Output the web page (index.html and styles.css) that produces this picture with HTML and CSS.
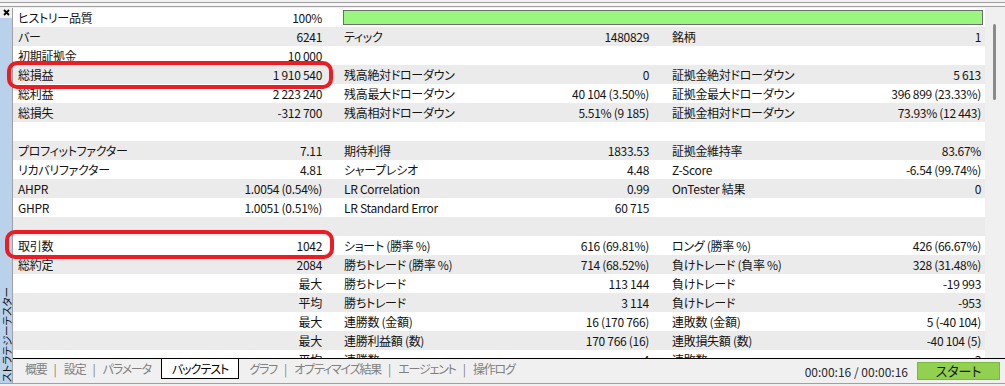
FILE: index.html
```html
<!DOCTYPE html>
<html lang="ja">
<head>
<meta charset="utf-8">
<title>ストラテジーテスター</title>
<link rel="stylesheet" href="styles.css">
</head>
<body>
<div class="top"><div class="top-lines"></div></div>
<div class="frame">
  <div class="side">
    <div class="close"><svg width="7" height="7" viewBox="0 0 7 7"><path d="M1 1 L6 6 M6 1 L1 6" stroke="#000" stroke-width="1.8" fill="none"/></svg></div>
    <div class="side-label"><span>ストラテジーテスター</span></div>
  </div>
  <div class="main">
    <div class="report">
      <div class="table">
        <div class="row">
          <div class="cell a"><span>ヒストリー品質</span><span>100%</span></div>
          <div class="cell bar-cell"><div class="bar"></div></div>
        </div>
        <div class="row">
          <div class="cell a"><span>バー</span><span>6241</span></div>
          <div class="cell b"><span>ティック</span><span>1480829</span></div>
          <div class="cell c"><span>銘柄</span><span>1</span></div>
        </div>
        <div class="row">
          <div class="cell a"><span>初期証拠金</span><span>10 000</span></div>
          <div class="cell b"></div>
          <div class="cell c"></div>
        </div>
        <div class="row">
          <div class="cell a"><span>総損益</span><span>1 910 540</span></div>
          <div class="cell b"><span>残高絶対ドローダウン</span><span>0</span></div>
          <div class="cell c"><span>証拠金絶対ドローダウン</span><span>5 613</span></div>
        </div>
        <div class="row">
          <div class="cell a"><span>総利益</span><span>2 223 240</span></div>
          <div class="cell b"><span>残高最大ドローダウン</span><span>40 104 (3.50%)</span></div>
          <div class="cell c"><span>証拠金最大ドローダウン</span><span>396 899 (23.33%)</span></div>
        </div>
        <div class="row">
          <div class="cell a"><span>総損失</span><span>-312 700</span></div>
          <div class="cell b"><span>残高相対ドローダウン</span><span>5.51% (9 185)</span></div>
          <div class="cell c"><span>証拠金相対ドローダウン</span><span>73.93% (12 443)</span></div>
        </div>
        <div class="row"></div>
        <div class="row">
          <div class="cell a"><span>プロフィットファクター</span><span>7.11</span></div>
          <div class="cell b"><span>期待利得</span><span>1833.53</span></div>
          <div class="cell c"><span>証拠金維持率</span><span>83.67%</span></div>
        </div>
        <div class="row">
          <div class="cell a"><span>リカバリファクター</span><span>4.81</span></div>
          <div class="cell b"><span>シャープレシオ</span><span>4.48</span></div>
          <div class="cell c"><span>Z-Score</span><span>-6.54 (99.74%)</span></div>
        </div>
        <div class="row">
          <div class="cell a"><span>AHPR</span><span>1.0054 (0.54%)</span></div>
          <div class="cell b"><span>LR Correlation</span><span>0.99</span></div>
          <div class="cell c"><span>OnTester 結果</span><span>0</span></div>
        </div>
        <div class="row">
          <div class="cell a"><span>GHPR</span><span>1.0051 (0.51%)</span></div>
          <div class="cell b"><span>LR Standard Error</span><span>60 715</span></div>
          <div class="cell c"></div>
        </div>
        <div class="row"></div>
        <div class="row">
          <div class="cell a"><span>取引数</span><span>1042</span></div>
          <div class="cell b"><span>ショート (勝率 %)</span><span>616 (69.81%)</span></div>
          <div class="cell c"><span>ロング (勝率 %)</span><span>426 (66.67%)</span></div>
        </div>
        <div class="row">
          <div class="cell a"><span>総約定</span><span>2084</span></div>
          <div class="cell b"><span>勝ちトレード (勝率 %)</span><span>714 (68.52%)</span></div>
          <div class="cell c"><span>負けトレード (負率 %)</span><span>328 (31.48%)</span></div>
        </div>
        <div class="row">
          <div class="cell a"><span></span><span>最大</span></div>
          <div class="cell b"><span>勝ちトレード</span><span>113 144</span></div>
          <div class="cell c"><span>負けトレード</span><span>-19 993</span></div>
        </div>
        <div class="row">
          <div class="cell a"><span></span><span>平均</span></div>
          <div class="cell b"><span>勝ちトレード</span><span>3 114</span></div>
          <div class="cell c"><span>負けトレード</span><span>-953</span></div>
        </div>
        <div class="row">
          <div class="cell a"><span></span><span>最大</span></div>
          <div class="cell b"><span>連勝数 (金額)</span><span>16 (170 766)</span></div>
          <div class="cell c"><span>連敗数 (金額)</span><span>5 (-40 104)</span></div>
        </div>
        <div class="row">
          <div class="cell a"><span></span><span>最大</span></div>
          <div class="cell b"><span>連勝利益額 (数)</span><span>170 766 (16)</span></div>
          <div class="cell c"><span>連敗損失額 (数)</span><span>-40 104 (5)</span></div>
        </div>
        <div class="row last">
          <div class="cell a"><span></span><span>平均</span></div>
          <div class="cell b"><span>連勝数</span><span>4</span></div>
          <div class="cell c"><span>連敗数</span><span>3</span></div>
        </div>
      </div>
      <div class="scroll"><div class="thumb"></div></div>
    </div>
    <div class="tabbar">
      <div class="tabs">
        <span class="tab">概要</span><span class="sep">|</span>
        <span class="tab">設定</span><span class="sep">|</span>
        <span class="tab">パラメータ</span>
        <span class="tab active">バックテスト</span>
        <span class="tab">グラフ</span><span class="sep">|</span>
        <span class="tab">オプティマイズ結果</span><span class="sep">|</span>
        <span class="tab">エージェント</span><span class="sep">|</span>
        <span class="tab">操作ログ</span>
      </div>
      <div class="status">00:00:16 / 00:00:16</div>
      <div class="start">スタート</div>
    </div>
  </div>
</div>
<div class="bottom"></div>
<div class="mark mark-1"></div>
<div class="mark mark-2"></div>
</body>
</html>
```

FILE: styles.css
```css
* { box-sizing: border-box; margin: 0; padding: 0; }
html, body { width: 1005px; height: 386px; overflow: hidden; }
body {
  position: relative;
  background: #f0f0f0;
  font-family: "Noto Sans CJK JP", "Noto Sans", sans-serif;
  font-size: 12px;
  color: #141414;
  font-feature-settings: "palt";
}
.top { height: 8px; padding-top: 2px; }
.top-lines { height: 5px; border-top: 1px solid #a0a0a0; border-bottom: 1px solid #a0a0a0; background: #f7f7f7; }

.frame { display: flex; height: 375px; }
.side { width: 13px; border-right: 1px solid #a0a0a0; display: flex; flex-direction: column; }
.close { height: 10px; display: flex; padding: 1px 0 0 3px; background: #f0f0f0; }
.side-label { flex: 1; background: #b9d1ea; display: flex; align-items: flex-end; justify-content: center; padding-bottom: 1px; }
.side-label span {
  writing-mode: vertical-rl;
  text-orientation: sideways;
  transform: rotate(180deg);
  font-size: 10.5px;
  line-height: 11px;
  color: #141414;
}

.main { flex: 1; display: flex; flex-direction: column; min-width: 0; }
.report { height: 350px; display: flex; overflow: hidden; }
.table { width: 972px; flex: none; background: #fff; }
.row { display: grid; grid-template-columns: 317px 330px 325px; height: 19px; line-height: 19px; white-space: nowrap; letter-spacing: -0.3px; }
.row:nth-child(even) { background: #ebebeb; }
.row.last { height: 8px; overflow: hidden; }
.cell { display: flex; justify-content: space-between; }
.cell.a { padding: 0 8px 0 5px; }
.cell.b { padding: 0 11px 0 14px; }
.cell.c { padding: 0 4px 0 12px; }
.bar-cell { grid-column: 2 / 4; padding: 2px 2px 2px 13px; }
.bar { flex: 1; height: 15px; border: 1px solid #6e6e6e; background: #99f77f; }

.scroll { flex: 1; padding: 16px 0 0 8px; background: #f0f0f0; }
.thumb { width: 3px; height: 76px; background: #8a8a8a; border-radius: 2px; }

.tabbar { height: 25px; border-top: 1px solid #000; display: flex; align-items: flex-start; }
.tabs { display: flex; padding-left: 5px; color: #808080; letter-spacing: -1.2px; }
.tab { padding: 0 7px; height: 20px; line-height: 19px; }
.sep { line-height: 19px; letter-spacing: 0; }
.tab.active { background: #fff; color: #000; border: 1px solid #000; border-top: 0; padding: 0 10px; margin: 0 3px; letter-spacing: -1px; }
.status { margin-left: auto; margin-top: 3px; line-height: 19px; color: #2a2a2a; }
.start {
  margin: 3px 5px 0 9px;
  width: 83px; height: 18px;
  background: #92d050;
  border: 1px solid #78b83e;
  text-align: center;
  line-height: 16px;
  font-size: 13px;
  color: #1a1a1a;
}
.bottom { height: 1px; background: #a0a0a0; }

.mark { position: absolute; border: 4px solid #ec1c24; border-radius: 10px; }
.mark-1 { left: 7px; top: 61px; width: 326px; height: 28px; }
.mark-2 { left: 5px; top: 230px; width: 329px; height: 29px; }
```
